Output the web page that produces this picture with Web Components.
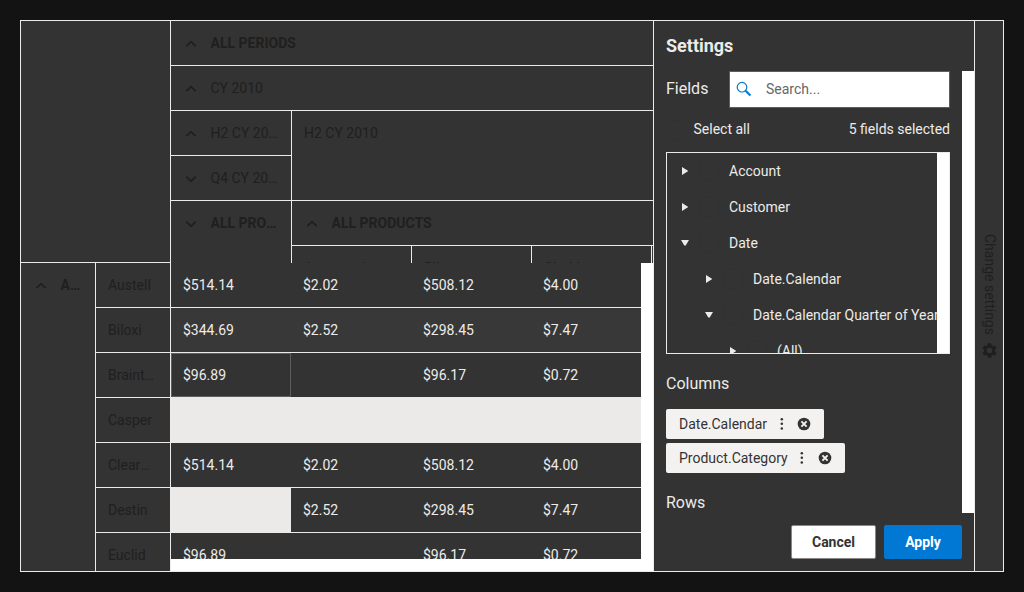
<!DOCTYPE html>
<html lang="en">
<head>
<meta charset="utf-8">
<title>Pivot table</title>
<style>
html,body{margin:0;height:100%;background:#131313}
body{font:14px/20px Roboto,"Liberation Sans",sans-serif;overflow:hidden}
</style>
</head>
<body>
<pivot-app></pivot-app>
<script>
const define = (name, html, setup) => {
  customElements.define(name, class extends HTMLElement {
    connectedCallback() {
      if (this.shadowRoot) return;
      const t = document.createElement('template');
      t.innerHTML = typeof html === 'function' ? html(this) : html;
      this.attachShadow({mode: 'open'}).append(t.content.cloneNode(true));
      if (setup) setup(this);
    }
  });
};

/* Header cell: optional chevron (icon="up|down") and a truncated label */
define('head-cell', el => `
<style>
:host{display:flex;box-sizing:border-box;min-width:0;padding:12px 12px 0 12px;color:#201f1e;overflow:hidden;align-items:flex-start;
 border:0 solid #edebe9;border-right-width:var(--r,0);border-bottom-width:var(--b,0)}
:host([bold]){font-weight:700}
svg{flex:none;width:16px;height:20px;margin-right:11.5px}
span{white-space:nowrap;overflow:hidden;text-overflow:ellipsis;min-width:0;flex:1}
</style>
${el.hasAttribute('icon') ? `<svg viewBox="0 0 16 20" fill="none" stroke="#201f1e" stroke-width="1.8"><path d="${el.getAttribute('icon') === 'up' ? 'M3.3 13.2 8 8.7 12.700 13.2' : 'M3.3 8.700 8 13.200 12.700 8.700'}"/></svg>` : ''}
<span><slot></slot></span>`);

define('value-cell', `
<style>
:host{display:block;box-sizing:border-box;height:45px;padding:12px 12px 0;border-bottom:1px solid #edebe9;color:#edebe9;background:#333}
:host([alt]){background:#383838}
:host([empty]){background:#ebeae9}
:host([focused]){box-shadow:inset 0 0 0 1px #605e5c}
</style><slot></slot>`);

define('pivot-columns', `
<style>
:host{display:grid;height:242px;overflow:hidden;grid-template-columns:121px 120px 120px 120px 120px;grid-template-rows:repeat(6,45px)}
.b{--b:1px}.r{--r:1px}
</style>
<head-cell class="b" style="grid-area:1/1/2/6" icon="up" bold>ALL PERIODS</head-cell>
<head-cell class="b" style="grid-area:2/1/3/6" icon="up">CY 2010</head-cell>
<head-cell class="b r" style="grid-area:3/1/4/2" icon="up">H2 CY 2010</head-cell>
<head-cell class="b" style="grid-area:3/2/5/6">H2 CY 2010</head-cell>
<head-cell class="b r" style="grid-area:4/1/5/2" icon="down">Q4 CY 2010</head-cell>
<head-cell class="r" style="grid-area:5/1/7/2" icon="down" bold>ALL PRODUCTS</head-cell>
<head-cell class="b" style="grid-area:5/2/6/6" icon="up" bold>ALL PRODUCTS</head-cell>
<head-cell class="r" style="grid-area:6/2/7/3">Accessories</head-cell>
<head-cell class="r" style="grid-area:6/3/7/4">Bikes</head-cell>
<head-cell class="r" style="grid-area:6/4/7/5">Clothing</head-cell>`);

define('pivot-rows', `
<style>
:host{display:grid;height:308px;overflow:hidden;grid-template-columns:75px 75px;grid-template-rows:repeat(7,45px);--r:1px}
.b{--b:1px}
</style>
<head-cell style="grid-area:1/1/8/2" icon="up" bold>ALL</head-cell>
<head-cell class="b">Austell</head-cell>
<head-cell class="b">Biloxi</head-cell>
<head-cell class="b">Braintree</head-cell>
<head-cell class="b">Casper</head-cell>
<head-cell class="b">Clearwater</head-cell>
<head-cell class="b">Destin</head-cell>
<head-cell class="b">Euclid</head-cell>`);

const rows = [
  ['$514.14', '$2.02', '$508.12', '$4.00'],
  ['$344.69', '$2.52', '$298.45', '$7.47'],
  ['$96.89', '', '$96.17', '$0.72'],
  [null, null, null, null],
  ['$514.14', '$2.02', '$508.12', '$4.00'],
  [null, '$2.52', '$298.45', '$7.47'],
  ['$96.89', '', '$96.17', '$0.72'],
];
define('pivot-values', `
<style>
:host{display:block;height:308px;background:#fff;overflow:hidden}
.view{width:470px;height:296px;overflow:hidden}
.grid{display:grid;grid-template-columns:repeat(4,120px)}
</style>
<div class="view"><div class="grid">${rows.map((r, i) => r.map((v, j) =>
  `<value-cell${v === null ? ' empty' : ''}${i === 1 ? ' alt' : ''}${i === 2 && j === 0 ? ' focused' : ''}>${v || ''}</value-cell>`).join('')).join('')}</div></div>`);

define('check-box', `<style>:host{display:block;box-sizing:border-box;width:20px;height:20px;border:1px solid #313130;flex:none}</style>`);

define('tree-node', el => `
<style>
:host{display:flex;height:36px;align-items:center;color:#edebe9;white-space:nowrap;padding-left:${10 + 24 * (+el.getAttribute('level') || 0)}px}
svg{width:16px;height:16px;flex:none}
check-box{margin:0 10px 0 6px}
</style>
<svg viewBox="0 0 16 16" fill="#edebe9"><path d="${el.hasAttribute('open') ? 'M4 4.9h8L8.7 10.6H7.3z' : 'M5 4l6.3 4L5 12z'}"/></svg>
<check-box></check-box><slot></slot>`);

define('field-chip', `
<style>
:host{display:flex;box-sizing:border-box;width:max-content;height:30px;align-items:center;padding:0 13px;background:#f3f2f1;color:#333;border-radius:2px}
.dots{width:4px;height:14px;margin-left:12.5px}
.close{width:14px;height:14px;margin-left:13.3px}
svg{flex:none}
</style>
<slot></slot>
<svg class="dots" viewBox="0 0 4 14" fill="#333"><circle cx="1.8" cy="2.2" r="1.25"/><circle cx="1.8" cy="6.8" r="1.25"/><circle cx="1.8" cy="11.4" r="1.25"/></svg>
<svg class="close" viewBox="0 0 14 14"><circle cx="7" cy="7" r="6.3" fill="#333"/><path d="M4.400 4.400 9.600 9.600M9.600 4.400 4.400 9.600" stroke="#f3f2f1" stroke-width="1.900"/></svg>`);

define('push-button', `
<style>
:host{display:block;box-sizing:border-box;height:34px;line-height:32px;text-align:center;font-weight:700;border:1px solid #8a8886;border-radius:2px;background:#fff;color:#333}
:host([primary]){background:#0078d4;border-color:#0078d4;color:#fff}
</style><slot></slot>`);

define('settings-panel', `
<style>
:host{display:flex;flex-direction:column;box-sizing:border-box;border-left:1px solid #edebe9;color:#edebe9;height:550px;overflow:hidden}
h2{font-size:18px;line-height:24px;font-weight:700;margin:0;padding:13px 12px}
.scroll{display:flex;height:442px;overflow:hidden}
.body{width:284px;padding:0 12px}
.bar{width:12px;background:#fff}
.search{display:flex;align-items:center;height:37px}
.label{font-size:16px;line-height:24px}
.search .label{width:63px;margin-top:-2px}
.box{flex:1;display:flex;align-items:center;box-sizing:border-box;height:37px;border:1px solid #605e5c;background:#fff;color:#666;padding:0 0 1px 6px}
.box svg{width:16px;height:16px;margin-right:14px}
.all{display:flex;align-items:center;height:20px;margin:11px 0 13px}
.all check-box{margin-right:7.5px;margin-top:1px}
.all b{font-weight:400;margin-left:auto}
.tree{display:flex;box-sizing:border-box;height:202px;border:1px solid #edebe9;overflow:hidden}
.nodes{width:270px;overflow:hidden}
.chips{display:grid;gap:4px;margin:13px 0 18px}
.columns{margin-top:18px}
footer{display:flex;justify-content:flex-end;gap:8px;padding:12px}
</style>
<h2>Settings</h2>
<div class="scroll"><div class="body">
<div class="search"><span class="label">Fields</span><div class="box">
<svg viewBox="0 0 16 16" fill="none" stroke="#0078d4"><circle cx="6" cy="6.2" r="4.8" stroke-width="1.2"/><path d="M9.6 9.8 14.4 14.6" stroke-width="2.1"/></svg>Search...</div></div>
<div class="all"><check-box></check-box>Select all<b>5 fields selected</b></div>
<div class="tree"><div class="nodes">
<tree-node>Account</tree-node><tree-node>Customer</tree-node><tree-node open>Date</tree-node>
<tree-node level="1">Date.Calendar</tree-node><tree-node level="1" open>Date.Calendar Quarter of Year</tree-node><tree-node level="2">(All)</tree-node>
</div><div class="bar"></div></div>
<div class="label columns">Columns</div>
<div class="chips"><field-chip>Date.Calendar</field-chip><field-chip>Product.Category</field-chip></div>
<div class="label">Rows</div>
</div><div class="bar"></div></div>
<footer><push-button style="width:85px">Cancel</push-button><push-button primary style="width:78px">Apply</push-button></footer>`);

define('settings-toggle', `
<style>
:host{display:flex;flex-direction:column;justify-content:center;align-items:center;box-sizing:border-box;border-left:1px solid #edebe9;color:#201f1e}
span{writing-mode:vertical-rl;line-height:20px;margin-left:2px}
svg{width:15px;height:15px;margin-top:8px}
</style>
<span>Change settings</span>
<svg viewBox="2 2 20 20" fill="#201f1e"><path d="M19.140 12.940c.04-.3.06-.61.06-.94s-.02-.64-.07-.94l2.030-1.580a.49.49 0 0 0 .12-.61l-1.920-3.320a.49.49 0 0 0-.59-.22l-2.390.96a7 7 0 0 0-1.620-.94l-.36-2.540a.48.48 0 0 0-.48-.41h-3.840a.48.48 0 0 0-.47.41l-.36 2.540a7.300 7.300 0 0 0-1.620.94l-2.390-.96a.48.48 0 0 0-.59.22L2.740 8.870a.47.47 0 0 0 .12.610l2.030 1.580a6 6 0 0 0 0 1.880l-2.030 1.580a.49.49 0 0 0-.12.610l1.920 3.320c.12.22.37.29.59.22l2.390-.96c.5.380 1.030.7 1.620.940l.36 2.540c.05.240.240.410.480.410h3.840c.240 0 .440-.170.470-.410l.360-2.540a7 7 0 0 0 1.620-.940l2.390.960c.220.080.470 0 .590-.220l1.920-3.320a.470.470 0 0 0-.120-.610zM12 15.600a3.600 3.600 0 1 1 0-7.200 3.600 3.600 0 0 1 0 7.200z"/></svg>`);

define('pivot-app', `
<style>
:host{display:grid;box-sizing:border-box;width:984px;height:552px;border:1px solid #edebe9;background:#333;
 grid-template-columns:150px 482px 321px 29px;grid-template-rows:242px 308px;overflow:hidden;translate:20px 20px}
.corner{box-sizing:border-box;border:0 solid #edebe9;border-width:0 1px 1px 0}
settings-panel{grid-area:1/3/3/4}
settings-toggle{grid-area:1/4/3/5}
pivot-columns{grid-area:1/2}
</style>
<div class="corner"></div><pivot-columns></pivot-columns>
<pivot-rows></pivot-rows><pivot-values></pivot-values>
<settings-panel></settings-panel><settings-toggle></settings-toggle>`);
</script>
</body>
</html>
